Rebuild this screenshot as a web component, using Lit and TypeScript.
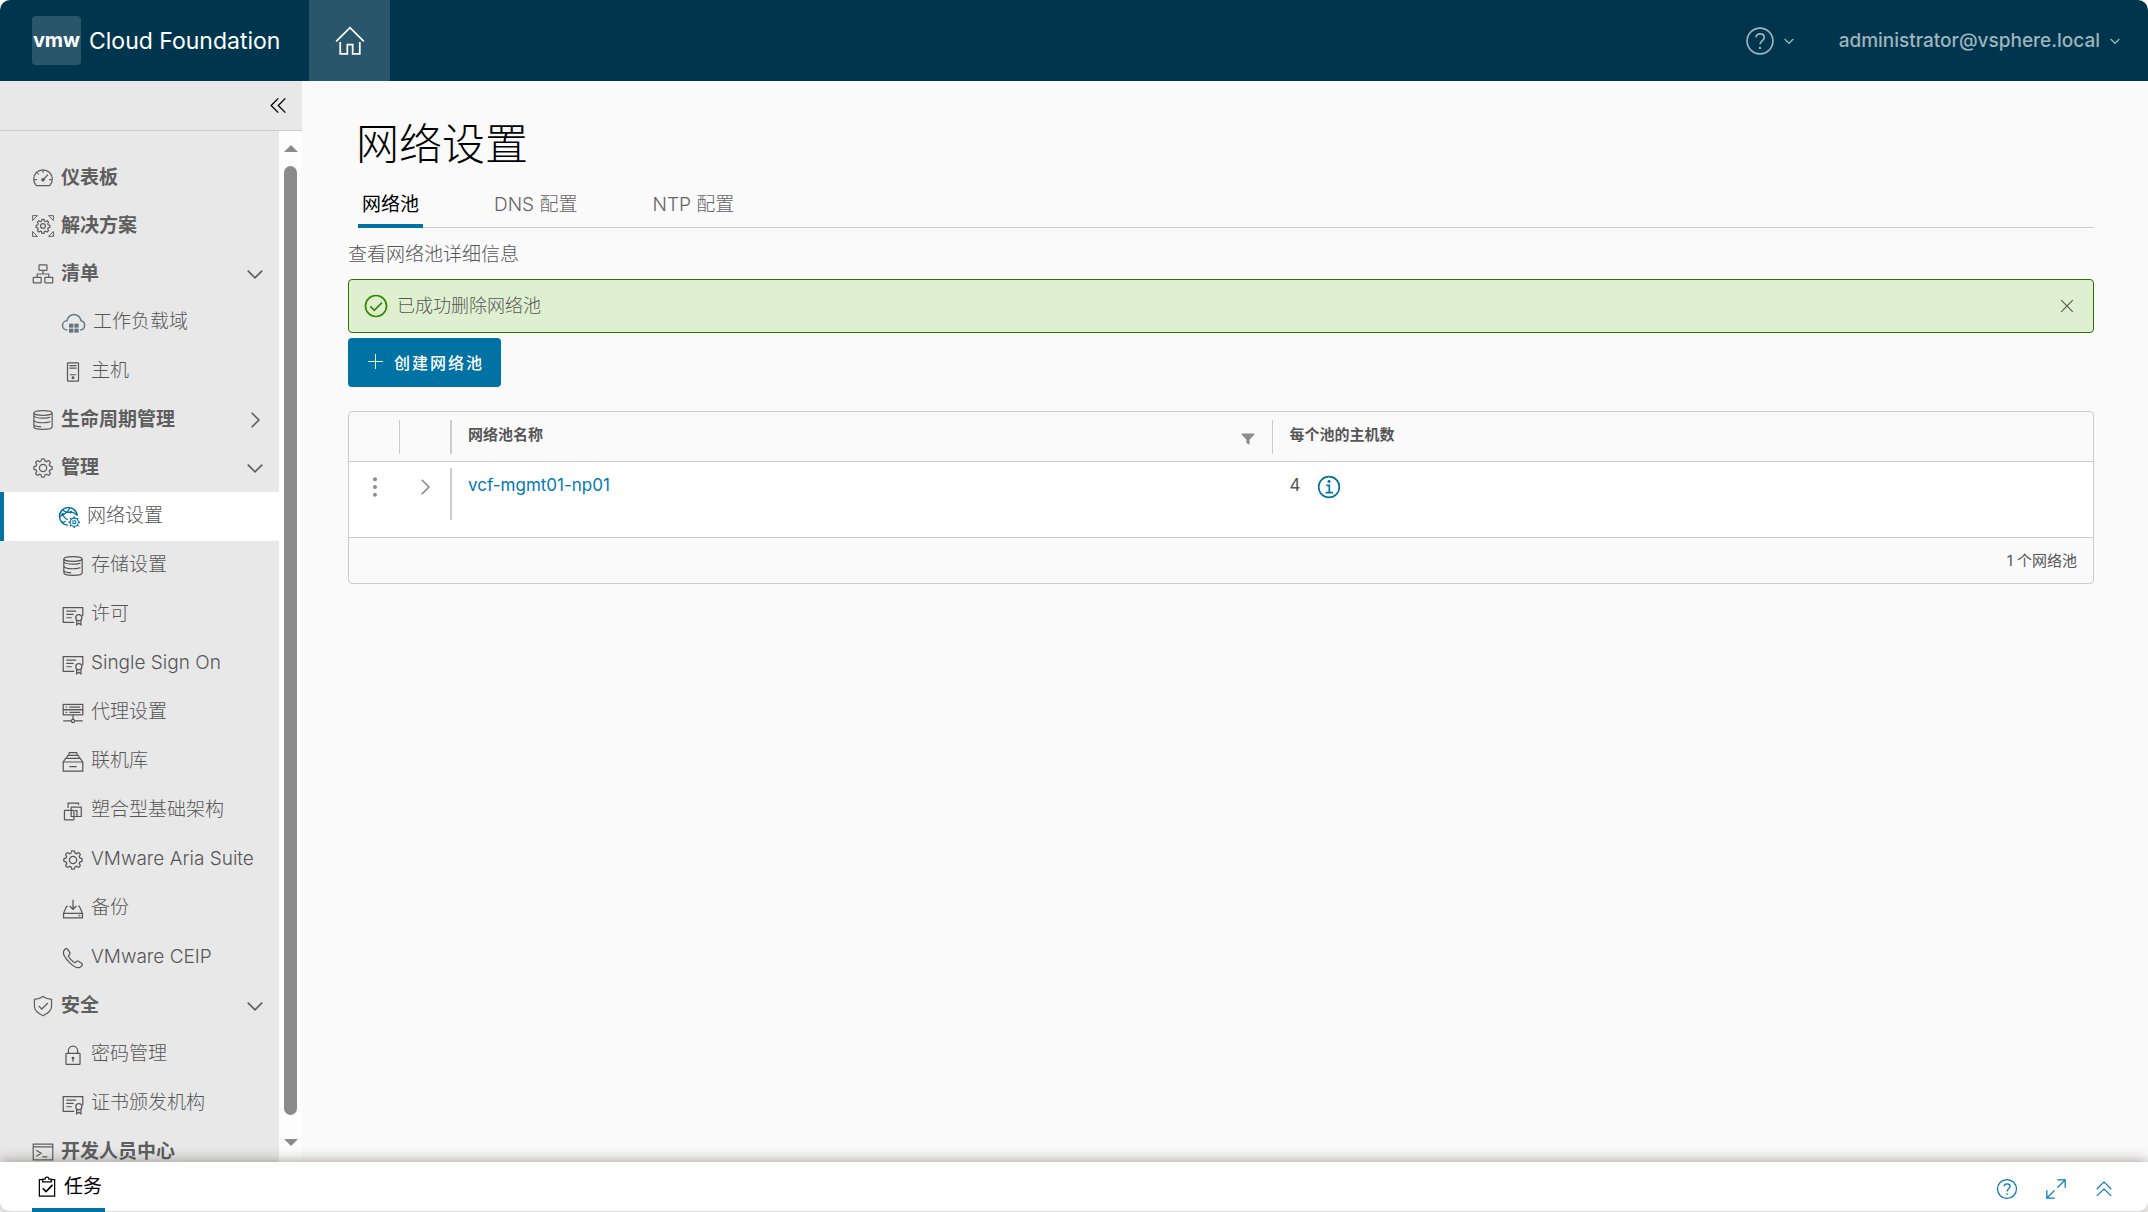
import { LitElement, html, svg, css, nothing } from "lit";
import { customElement, property, state } from "lit/decorators.js";
import { classMap } from "lit/directives/class-map.js";

const cog = svg`
  <path fill="currentColor" stroke="none" d="M18.1,11c-3.9,0-7,3.1-7,7s3.1,7,7,7c3.9,0,7-3.1,7-7S22,11,18.1,11z M18.1,23c-2.8,0-5-2.2-5-5s2.2-5,5-5c2.8,0,5,2.2,5,5S20.9,23,18.1,23z"/>
  <path fill="currentColor" stroke="none" d="M32.8,14.7L30,13.8l-0.6-1.5l1.4-2.6c0.3-0.6,0.2-1.4-0.3-1.9l-2.4-2.4c-0.5-0.5-1.3-0.6-1.9-0.3l-2.6,1.4l-1.5-0.6l-0.9-2.8C21,2.5,20.4,2,19.7,2h-3.4c-0.7,0-1.3,0.5-1.4,1.2L14,6c-0.6,0.1-1.1,0.3-1.6,0.6L9.8,5.2C9.2,4.9,8.4,5,7.9,5.5L5.5,7.9C5,8.4,4.9,9.2,5.2,9.8l1.3,2.5c-0.2,0.5-0.4,1.1-0.6,1.6l-2.8,0.9C2.5,15,2,15.6,2,16.3v3.4c0,0.7,0.5,1.3,1.2,1.5L6,22.1l0.6,1.5l-1.4,2.6c-0.3,0.6-0.2,1.4,0.3,1.9l2.4,2.4c0.5,0.5,1.3,0.6,1.9,0.3l2.6-1.4l1.5,0.6l0.9,2.9c0.2,0.6,0.8,1.1,1.5,1.1h3.4c0.7,0,1.3-0.5,1.5-1.1l0.9-2.9l1.5-0.6l2.6,1.4c0.6,0.3,1.4,0.2,1.9-0.3l2.4-2.4c0.5-0.5,0.6-1.3,0.3-1.9l-1.4-2.6l0.6-1.5l2.9-0.9c0.6-0.2,1.1-0.8,1.1-1.5v-3.4C34,15.6,33.5,14.9,32.8,14.7z M32,19.4l-3.6,1.1L28.3,21c-0.3,0.7-0.6,1.4-0.9,2.1l-0.3,0.5l1.8,3.3l-2,2l-3.3-1.8l-0.5,0.3c-0.7,0.4-1.4,0.7-2.1,0.9l-0.5,0.1L19.4,32h-2.8l-1.1-3.6L15,28.3c-0.7-0.3-1.4-0.6-2.1-0.9l-0.5-0.3l-3.3,1.8l-2-2l1.8-3.3l-0.3-0.5c-0.4-0.7-0.7-1.4-0.9-2.1l-0.1-0.5L4,19.4v-2.8l3.4-1l0.2-0.5c0.2-0.8,0.5-1.5,0.9-2.2l0.3-0.5L7.1,9.1l2-2l3.2,1.8l0.5-0.3c0.7-0.4,1.4-0.7,2.2-0.9l0.5-0.2L16.6,4h2.8l1.1,3.5L21,7.7c0.7,0.2,1.4,0.5,2.1,0.9l0.5,0.3l3.3-1.8l2,2l-1.8,3.3l0.3,0.5c0.4,0.7,0.7,1.4,0.9,2.1l0.1,0.5l3.6,1.1V19.4z"/>`;

const icons: Record<string, unknown> = {
  cog,
  home: svg`<path d="M2.5 18.5 18 3l15.500 15.500M7 19v13.500h8V22h6v10.500h8V19"/>`,
  help: svg`<circle cx="18" cy="18" r="15.500"/><path d="M13 13.500c.6-2.700 2.600-4 5.100-4 2.900 0 5 1.600 5 4.200 0 3.900-5 3.800-5 8.300"/><circle class="dot" cx="18" cy="26.300" r="1.400"/>`,
  down: svg`<path d="m5 12 13 13 13-13"/>`,
  right: svg`<path d="m12 5 13 13-13 13"/>`,
  collapse: svg`<path d="M17.500 4.500 4 18l13.500 13.500M31 4.500 17.500 18 31 31.500"/>`,
  expandUp: svg`<path d="M5 18 18 5.500 31 18M5 30.500 18 18l13 12.500"/>`,
  gauge: svg`<path d="M7 30.500h22a15.300 15.300 0 1 0-22 0z"/><path d="M18 5.500v4M9 10l2 2M3.500 20.500h4.500M28 20.500h4.500M19 20l7-7.500"/><circle class="dot" cx="18" cy="21" r="3"/>`,
  solutions: svg`<g transform="translate(5.200 5.200) scale(.71)"><path stroke-width="2.800" d="M15.800 3h4.400l1.300 4 2.400 1 3.800-1.900 3.100 3.100-1.900 3.800 1 2.400 4 1.300v4.400l-4 1.300-1 2.400 1.900 3.800-3.100 3.100-3.800-1.900-2.400 1-1.300 4h-4.400l-1.300-4-2.400-1-3.800 1.900-3.100-3.100 1.900-3.800-1-2.400-4-1.300v-4.400l4-1.300 1-2.400-1.900-3.800 3.100-3.100 3.800 1.900 2.400-1z"/><circle stroke-width="2.800" cx="18" cy="18" r="5.500"/></g><path d="M1 9V1h8zM27 1h8v8zM1 27v8h8zM35 27v8h-8z" stroke-width="1.600"/>`,
  tree: svg`<rect x="11.500" y="3" width="13" height="9" rx="1"/><rect x="2" y="23.500" width="13" height="9" rx="1"/><rect x="21" y="23.500" width="13" height="9" rx="1"/><path d="M18 12v6M8.500 23v-5h19v5"/>`,
  cloud: svg`<g stroke="#5f7f91" stroke-width="2.300"><path d="M8 28.500a7 7 0 0 1-.5-14 10.600 10.600 0 0 1 21 0 7.100 7.100 0 0 1-1.500 14"/></g><g fill="#66737b" stroke="none"><rect x="10.500" y="19" width="6.500" height="6"/><rect x="18.500" y="19" width="6.500" height="6"/><rect x="10.500" y="26.500" width="6.500" height="6"/><rect x="18.500" y="26.500" width="6.500" height="6"/></g>`,
  host: svg`<rect x="9" y="3" width="18" height="30" rx="1"/><path d="M12 7.500h12M12 11.500h12M13 22.500h10"/><circle class="dot" cx="18" cy="27.500" r="2.400"/>`,
  storage: svg`<ellipse cx="18" cy="6.500" rx="15" ry="4"/><path d="M3 6.500v22.500c0 2.300 6.500 4.200 15 4.200s15-1.900 15-4.200V6.500M3 11c1.500 2.300 7 4 15 4 5 0 10-.7 12-2M3 18.500c1.500 2.300 7 4 15 4 5 0 10-.7 12-2M3 26c1.500 1.800 7 3 12 3"/>`,
  certificate: svg`<path d="M20 30H2V6h32v14M7 11.500h16M7 17h12M7 22.500h9"/><circle cx="27.500" cy="22.500" r="5"/><path d="M24 26.500V34l3.500-2.500L31 34v-7.500"/>`,
  network: svg`<circle cx="17" cy="17" r="14.500" stroke-width="2.400"/><path stroke-width="2" d="M8 7c4 3 8 4 13 3M19 3c-1 4-6 10-16 14M21 10c4 0 7 2 10 5M7 12c2 6 5 9 10 11M5 25c2 2 5 2 8 0"/><circle class="dot" cx="21" cy="10" r="2.200"/><circle class="dot" cx="8" cy="13.500" r="2.200"/><path d="M16 16h21v21H16z" fill="#fff" stroke="none"/><g transform="translate(16.500 16.500) scale(.56)"><circle cx="18" cy="18" r="12" stroke-width="3"/><rect x="14" y="14" width="8" height="8" stroke-width="2.800"/><path stroke-width="4" d="M18 1v5M18 30v5M1 18h5M30 18h5M6 6l3 3M27 27l3 3M6 30l3-3M27 9l3-3"/></g>`,
  proxy: svg`<rect x="2" y="4" width="32" height="8.500"/><rect x="2" y="12.500" width="32" height="8.500"/><path d="M6 8.300h2.500M12 8.300h18M6 16.800h2.500M12 16.800h18M18 21v7M2 31h13M21 31h13"/><circle cx="18" cy="31" r="2.600"/>`,
  depot: svg`<path d="M2 18h32v15H2zM2 18l4-6h24l4 6M7.500 11l2-4h17l2 4M11 6l1-3.500h12L25 6M12 25.500h12"/>`,
  compose: svg`<rect x="4" y="17" width="15.500" height="15.500" rx="1"/><path d="M10 13V5h17v3M15 21v-9.500h16.500V27H22M15 21v6h9.500v-9.500H21"/>`,
  backup: svg`<path d="M18 3v15M12.500 13l5.500 5.500 5.500-5.500M10 13.500H7.500L2.500 25v7.500h31V25l-5-11.500H26M2.500 25h31M27 29h3"/>`,
  phone: svg`<path d="M29 33.500c-3 1-9-.5-16.500-8S1.500 11 2.500 7.500c.6-2 2.200-4 4-4.800 1-.4 2-.1 2.600.8l3.700 5.700c.6 1 .5 2-.2 2.800l-2.200 2.500c1 3.500 7.500 10 11 11.200l2.500-2.200c.8-.7 1.900-.8 2.800-.2l5.800 3.700c.9.6 1.200 1.700.7 2.600-.8 1.700-2.400 3.300-4.200 3.900z"/>`,
  shield: svg`<path d="M18 2.500c4 3 9 4.500 14 4.500v12c0 7-7.500 12-14 15C11.500 31 4 26 4 19V7c5 0 10-1.500 14-4.500z"/><path d="m11 18 5 5 10-10"/>`,
  lock: svg`<rect x="6.500" y="15.500" width="23" height="18" rx="1"/><path d="M10.500 15V11a7.500 7.500 0 0 1 15 0v4M18 23v6"/><circle class="dot" cx="18" cy="23" r="2.300"/>`,
  terminal: svg`<path d="M2 5h32v26H2zM2 9.500h32M7 15l8 5-8 5M17 26h8"/>`,
  task: svg`<path d="M11 6H5.500v27h25V6H25M11 9.500V5h4a3 3 0 0 1 6 0h4v4.500z"/><path d="m11 20 5.500 5.500L27 14.500" stroke-width="2.600"/>`,
  grow: svg`<path d="M20 3h13v13M33 3 20.500 15.500M16 33H3V20M3 33l12.500-12.500"/>`,
  check: svg`<circle cx="18" cy="18" r="15.800"/><path d="m9.500 18.500 6 6L27 13"/>`,
  close: svg`<path d="m5 5 26 26M31 5 5 31"/>`,
  plus: svg`<path d="M18 2v32M2 18h32"/>`,
  filter: svg`<path d="M2 4h32v3L22 20v13l-8-5v-8L2 7z" fill="currentColor" stroke="none"/>`,
  dots: svg`<g fill="currentColor" stroke="none"><circle cx="18" cy="4" r="3.600"/><circle cx="18" cy="18" r="3.600"/><circle cx="18" cy="32" r="3.600"/></g>`,
  info: svg`<circle cx="18" cy="18" r="15.500"/><path d="M14 15.500h4.500V26M13 26.500h11"/><circle class="dot" cx="18" cy="9.800" r="2.200"/>`,
};

@customElement("app-icon")
export class AppIcon extends LitElement {
  @property() name = "cog";

  static styles = css`
    :host { display: block; flex: none; width: 22px; height: 22px; }
    .glyph { display: block; width: 100%; height: 100%; overflow: visible; fill: none; stroke: currentColor; stroke-width: var(--stroke, 2); }
    .dot { fill: currentColor; stroke: none; }
  `;

  render() {
    return html`<svg class="glyph" viewBox="0 0 36 36" aria-hidden="true">${icons[this.name]}</svg>`;
  }
}

interface NavItem {
  label: string;
  icon: string;
  open?: boolean;
  children?: NavItem[];
}

const navigation: NavItem[] = [
  { label: "仪表板", icon: "gauge" },
  { label: "解决方案", icon: "solutions" },
  {
    label: "清单", icon: "tree", open: true, children: [
      { label: "工作负载域", icon: "cloud" },
      { label: "主机", icon: "host" },
    ],
  },
  { label: "生命周期管理", icon: "storage", open: false, children: [] },
  {
    label: "管理", icon: "cog", open: true, children: [
      { label: "网络设置", icon: "network" },
      { label: "存储设置", icon: "storage" },
      { label: "许可", icon: "certificate" },
      { label: "Single Sign On", icon: "certificate" },
      { label: "代理设置", icon: "proxy" },
      { label: "联机库", icon: "depot" },
      { label: "塑合型基础架构", icon: "compose" },
      { label: "VMware Aria Suite", icon: "cog" },
      { label: "备份", icon: "backup" },
      { label: "VMware CEIP", icon: "phone" },
    ],
  },
  {
    label: "安全", icon: "shield", open: true, children: [
      { label: "密码管理", icon: "lock" },
      { label: "证书颁发机构", icon: "certificate" },
    ],
  },
  { label: "开发人员中心", icon: "terminal" },
];

@customElement("side-nav")
export class SideNav extends LitElement {
  @state() private selected = "网络设置";

  static styles = css`
    :host { display: flex; flex-direction: column; width: 302px; flex: none; min-height: 0; background: #e8e8e8; color: #666; }
    button { font: inherit; color: inherit; background: none; border: 0; padding: 0; cursor: pointer; }
    .top { flex: none; display: flex; justify-content: flex-end; align-items: center; height: 49px; padding-right: 14px; border-bottom: 1px solid #ccc; color: #000; }
    .top app-icon { width: 19px; height: 19px; --stroke: 2.500; }
    .body { flex: 1; min-height: 0; display: flex; }
    .scroll { flex: 1; min-width: 0; overflow: hidden; padding-top: 23px; box-sizing: border-box; }
    ul { list-style: none; margin: 0; padding: 0; }
    .row { box-sizing: border-box; display: flex; align-items: center; width: 100%; height: 48px; gap: 7px; padding: 0 14px 0 32px; font-size: 19px; font-weight: 700; text-align: left; color: #5e5e5e; text-decoration: none; white-space: nowrap; }
    .label { flex: 1; line-height: 28px; padding-bottom: 1px; }
    .caret { width: 20px; height: 20px; --stroke: 3; }
    .child { height: 49px; padding-left: 62px; font-weight: 300; color: #565656; }
    .cloud { width: 24px; height: 24px; }
    .selected { background: #fff; border-left: 4px solid #0072a3; padding-left: 54px; }
    .selected app-icon { color: #0072a3; }
    .bar { flex: none; width: 23px; background: #fdfdfd; display: flex; flex-direction: column; align-items: center; justify-content: space-between; gap: 14px; padding: 14px 0 16px; box-sizing: border-box; }
    .up, .dn { border: 7px solid transparent; border-top-width: 0; border-bottom: 7px solid #8b8b8b; }
    .dn { border-bottom-width: 0; border-top: 7px solid #8b8b8b; }
    .thumb { flex: 1; width: 13px; margin-bottom: 10px; border-radius: 7px; background: #8b8b8b; }
  `;

  private child(item: NavItem) {
    const selected = item.label === this.selected;
    return html`<li>
      <a href="#" class=${classMap({ row: true, child: true, selected })}
        aria-current=${selected ? "page" : nothing}
        @click=${(e: Event) => { e.preventDefault(); this.selected = item.label; }}>
        <app-icon class=${item.icon} name=${item.icon}></app-icon><span class="label">${item.label}</span>
      </a>
    </li>`;
  }

  private toggle(item: NavItem) {
    item.open = !item.open;
    this.requestUpdate();
  }

  private group(item: NavItem) {
    if (!item.children) {
      return html`<li><a href="#" class="row"><app-icon name=${item.icon}></app-icon><span class="label">${item.label}</span></a></li>`;
    }
    return html`<li>
      <button class="row" type="button" aria-expanded=${String(!!item.open)} @click=${() => this.toggle(item)}>
        <app-icon name=${item.icon}></app-icon><span class="label">${item.label}</span>
        <app-icon class="caret" name=${item.open ? "down" : "right"}></app-icon>
      </button>
      ${item.open ? html`<ul>${item.children.map((c) => this.child(c))}</ul>` : nothing}
    </li>`;
  }

  render() {
    return html`
      <div class="top"><button type="button" aria-label="折叠"><app-icon name="collapse"></app-icon></button></div>
      <div class="body">
        <nav class="scroll"><ul>${navigation.map((i) => this.group(i))}</ul></nav>
        <div class="bar"><span class="up"></span><span class="thumb"></span><span class="dn"></span></div>
      </div>`;
  }
}

@customElement("network-settings")
export class NetworkSettings extends LitElement {
  @state() private tab = 0;
  @state() private alertOpen = true;

  static styles = css`
    :host { display: block; flex: 1; min-width: 0; overflow: hidden; padding: 37px 54px 24px 46px; background: #fafafa; color: #565656; font-size: 19px; font-weight: 300; }
    button { font: inherit; color: inherit; background: none; border: 0; padding: 0; cursor: pointer; }
    h1 { margin: 0 0 0 8px; font-size: 43px; line-height: 52px; font-weight: 300; color: #000; }
    .tabs { display: flex; gap: 67px; margin: 9px 0 0 10px; border-bottom: 1px solid #ccc; }
    .tab { height: 49px; margin-bottom: -1px; padding: 6px 4px 0; line-height: 28px; box-sizing: border-box; border-bottom: 4px solid transparent; color: #666; }
    .tab.active { border-bottom-color: #0072a3; color: #000; font-weight: 400; }
    .hint { margin: 13px 0 10px; line-height: 28px; }
    .alert { box-sizing: border-box; display: flex; align-items: center; gap: 9px; height: 54px; padding: 0 18px 0 15px; background: #dff0d0; border: 1px solid #2f6f00; border-radius: 4px; font-size: 18px; }
    .alert .ok { width: 24px; height: 24px; color: #318700; --stroke: 2.500; }
    .alert span { flex: 1; line-height: 28px; }
    .alert .x { width: 16px; height: 16px; --stroke: 2.500; }
    .create { display: flex; align-items: center; gap: 10px; height: 49px; margin-top: 5px; padding: 0 17px 2px 19px; background: #0072a3; border-radius: 4px; color: #fff; font-size: 16px; font-weight: 500; letter-spacing: 2px; }
    .create app-icon { width: 17px; height: 17px; }
    .grid { margin-top: 24px; border: 1px solid #ccc; border-radius: 4px; }
    table { width: 100%; border-collapse: collapse; table-layout: fixed; }
    .c1 { width: 50px; }
    .c2 { width: 51px; }
    th, td { padding: 0; text-align: left; vertical-align: top; font-weight: inherit; }
    th { padding: 8px 0 7px; font-size: 15px; font-weight: 700; border-bottom: 1px solid #ccc; }
    td { height: 76px; padding-top: 6px; box-sizing: border-box; background: #fff; border-bottom: 1px solid #ccc; font-weight: 400; font-size: 17px; }
    .cell { display: flex; align-items: flex-start; box-sizing: border-box; height: 34px; padding: 0 17px; line-height: 30px; }
    td .cell { height: 52px; line-height: 34px; }
    .sep { border-left: 1px solid #ccc; }
    .pin { border-left: 2px solid #ccc; padding-left: 16px; }
    .name { flex: 1; }
    .filter { width: 14px; height: 14px; margin-top: 12px; color: #8c8c8c; }
    .act { padding: 9px 16px; color: #8c8c8c; }
    .act app-icon { width: 20px; height: 20px; --stroke: 3; }
    td a { color: #0079b8; text-decoration: none; }
    .count { gap: 17px; padding-left: 18px; }
    .info { color: #0072a3; margin-top: 7px; --stroke: 2.500; }
    .info app-icon { width: 24px; height: 24px; }
    .foot { display: flex; justify-content: flex-end; align-items: center; box-sizing: border-box; height: 45px; padding: 0 16px 2px; font-size: 15px; font-weight: 400; }
  `;

  render() {
    return html`
      <h1>网络设置</h1>
      <div class="tabs" role="tablist">
        ${["网络池", "DNS 配置", "NTP 配置"].map((t, i) => html`
          <button type="button" role="tab" aria-selected=${String(i === this.tab)}
            class=${classMap({ tab: true, active: i === this.tab })} @click=${() => (this.tab = i)}>${t}</button>`)}
      </div>
      <p class="hint">查看网络池详细信息</p>
      ${this.alertOpen ? html`
        <div class="alert" role="status">
          <app-icon class="ok" name="check"></app-icon><span>已成功删除网络池</span>
          <button type="button" aria-label="关闭" @click=${() => (this.alertOpen = false)}><app-icon class="x" name="close"></app-icon></button>
        </div>` : nothing}
      <button type="button" class="create"><app-icon name="plus"></app-icon>创建网络池</button>
      <div class="grid">
        <table>
          <colgroup><col class="c1" /><col class="c2" /><col /><col /></colgroup>
          <thead>
            <tr>
              <th></th>
              <th><div class="cell sep"></div></th>
              <th scope="col"><div class="cell pin"><span class="name">网络池名称</span>
                <button type="button" aria-label="筛选"><app-icon class="filter" name="filter"></app-icon></button></div></th>
              <th scope="col"><div class="cell sep">每个池的主机数</div></th>
            </tr>
          </thead>
          <tbody>
            <tr>
              <td><button type="button" class="act" aria-label="操作"><app-icon name="dots"></app-icon></button></td>
              <td><button type="button" class="act" aria-label="展开"><app-icon name="right"></app-icon></button></td>
              <td><div class="cell pin"><a href="#">vcf-mgmt01-np01</a></div></td>
              <td><div class="cell count">4
                <button type="button" class="info" aria-label="信息"><app-icon name="info"></app-icon></button></div></td>
            </tr>
          </tbody>
        </table>
        <div class="foot">1 个网络池</div>
      </div>`;
  }
}

@customElement("app-root")
export class AppRoot extends LitElement {
  static styles = css`
    :host { display: flex; flex-direction: column; height: 100vh; overflow: hidden; background: #fff; font-family: Inter, "Noto Sans CJK SC", sans-serif; }
    button { font: inherit; color: inherit; background: none; border: 0; padding: 0; cursor: pointer; }
    header { flex: none; display: flex; align-items: center; height: 81px; background: #00364d; border-radius: 10px 10px 0 0; color: #fff; }
    .brand { display: flex; align-items: center; gap: 8px; padding: 0 29px 0 32px; color: #fff; text-decoration: none; font-size: 23px; white-space: nowrap; }
    .logo { display: grid; place-items: center; width: 49px; height: 49px; line-height: 49px; border-radius: 4px; background: #29566a; font-size: 20px; font-weight: 700; }
    .home { display: grid; place-items: center; width: 81px; height: 81px; background: #29566a; color: #fff; }
    .home app-icon { width: 32px; height: 32px; }
    .spacer { flex: 1; }
    .menu { display: flex; align-items: center; gap: 8px; color: #9fb3bd; font-size: 19px; font-weight: 500; }
    .menu .q { width: 30px; height: 30px; }
    .menu .v { width: 12px; height: 12px; --stroke: 4; }
    .user { gap: 9px; margin: 0 27px 0 44px; }
    main { flex: 1; min-height: 0; display: flex; }
    footer { position: relative; z-index: 1; flex: none; box-sizing: border-box; display: flex; align-items: stretch; height: 50px; padding: 0 34px 0 32px; background: #fff; border-bottom: 1px solid #ddd; border-radius: 0 0 10px 10px; box-shadow: 0 0 14px rgba(60, 50, 45, 0.5); }
    .tasks { display: flex; align-items: center; gap: 6px; padding: 0 3px 2px 4px; margin-bottom: -1px; border-bottom: 4px solid #0072a3; color: #000; font-size: 19px; }
    .tasks app-icon { margin-top: 6px; }
    .tools { display: flex; align-items: center; gap: 27px; margin-left: auto; padding-top: 4px; color: #0079b8; }
    .tools .small { width: 20px; height: 20px; }
  `;

  render() {
    return html`
      <header>
        <a class="brand" href="#"><span class="logo">vmw</span><span>Cloud Foundation</span></a>
        <a class="home" href="#" aria-label="主页"><app-icon name="home"></app-icon></a>
        <span class="spacer"></span>
        <button type="button" class="menu" aria-label="帮助"><app-icon class="q" name="help"></app-icon><app-icon class="v" name="down"></app-icon></button>
        <button type="button" class="menu user">administrator@vsphere.local<app-icon class="v" name="down"></app-icon></button>
      </header>
      <main><side-nav></side-nav><network-settings></network-settings></main>
      <footer>
        <button type="button" class="tasks"><app-icon name="task"></app-icon>任务</button>
        <div class="tools">
          <button type="button" aria-label="帮助"><app-icon name="help"></app-icon></button>
          <button type="button" aria-label="展开"><app-icon name="grow"></app-icon></button>
          <button type="button" aria-label="向上"><app-icon class="small" name="expandUp"></app-icon></button>
        </div>
      </footer>`;
  }
}
